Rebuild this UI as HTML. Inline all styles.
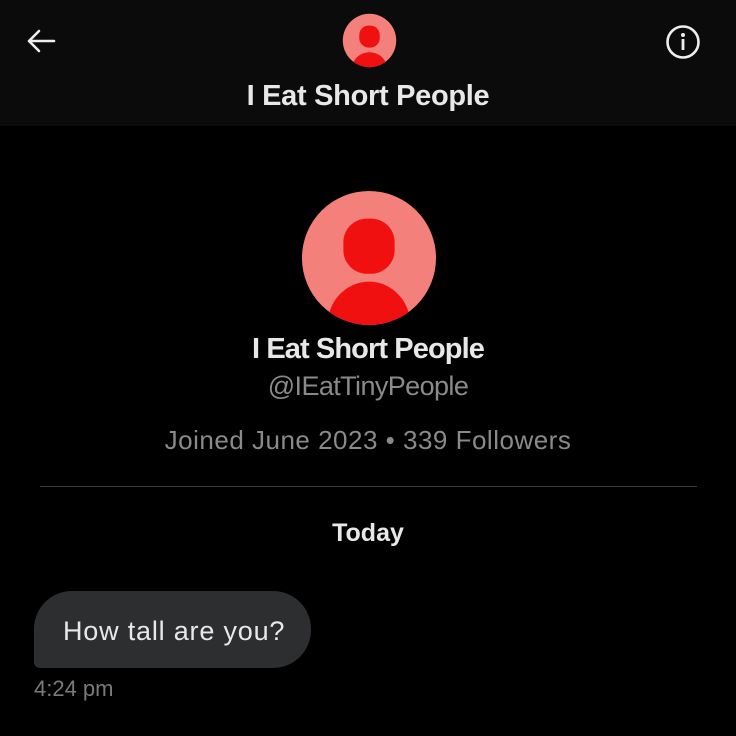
<!DOCTYPE html>
<html><head><style>
body{margin:0;width:736px;height:736px;background:#000;overflow:hidden;font-family:"Liberation Sans",sans-serif;position:relative}
.hdr{position:absolute;left:0;top:0;width:736px;height:126px;background:#0b0b0b}
.t{position:absolute;left:0;width:736px;text-align:center;white-space:nowrap}
</style></head><body>
<div class="hdr"></div>
<svg style="position:absolute;left:24px;top:26px" width="34" height="30" viewBox="0 0 34 30"><path d="M5 15H30M5 15L15 5M5 15L15 25" stroke="#eee" stroke-width="2.6" fill="none" stroke-linecap="round"/></svg>
<svg style="position:absolute;left:664px;top:23px" width="38" height="38" viewBox="0 0 38 38"><circle cx="19" cy="19" r="15.5" stroke="#eee" stroke-width="2.6" fill="none"/><circle cx="19" cy="12" r="2" fill="#eee"/><rect x="17.6" y="16" width="2.8" height="11" fill="#eee"/></svg>
<svg style="position:absolute;left:342px;top:13px" width="55" height="55" viewBox="0 0 140 140"><defs><clipPath id="c1"><circle cx="70" cy="70" r="68"/></clipPath></defs><circle cx="70" cy="70" r="68" fill="#f3807a"/><g clip-path="url(#c1)"><rect x="44" y="32" width="52" height="56" rx="24" fill="#f01010"/><ellipse cx="70" cy="140" rx="44" ry="40" fill="#f01010"/></g></svg>
<div class="t" style="top:80px;font-size:29px;font-weight:bold;color:#e8e8e8;letter-spacing:-0.3px">I Eat Short People</div>
<svg style="position:absolute;left:300px;top:189px" width="138" height="138" viewBox="0 0 140 140"><defs><clipPath id="c2"><circle cx="70" cy="70" r="68"/></clipPath></defs><circle cx="70" cy="70" r="68" fill="#f3807a"/><g clip-path="url(#c2)"><rect x="44" y="30" width="52" height="56" rx="24" fill="#f01010"/><ellipse cx="70" cy="138" rx="42" ry="44" fill="#f01010"/></g></svg>
<div class="t" style="top:333px;font-size:29px;font-weight:bold;color:#e8e8e8;letter-spacing:-0.9px">I Eat Short People</div>
<div class="t" style="top:371px;font-size:27px;color:#8a8a8a;letter-spacing:-0.6px">@IEatTinyPeople</div>
<div class="t" style="top:425px;font-size:26px;color:#8a8a8a;letter-spacing:0.5px">Joined June 2023 • 339 Followers</div>
<div style="position:absolute;left:40px;top:486px;width:657px;height:1px;background:#3a3a3a"></div>
<div class="t" style="top:519px;font-size:25px;font-weight:bold;color:#e8e8e8">Today</div>
<div style="position:absolute;left:34px;top:591px;width:277px;height:77px;background:#2d2e30;border-radius:38px 38px 38px 6px"></div>
<div style="position:absolute;left:63px;top:616px;font-size:27px;color:#e8e8e8;letter-spacing:0.8px;white-space:nowrap">How tall are you?</div>
<div style="position:absolute;left:34px;top:676px;font-size:22px;color:#7a7a7a">4:24 pm</div>
</body></html>
